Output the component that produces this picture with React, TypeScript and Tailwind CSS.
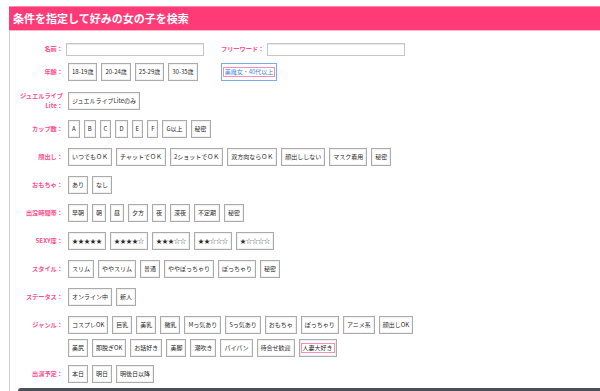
import React from "react";

const font = { fontFamily: '"Noto Sans CJK JP", "Noto Sans", sans-serif' };

type Row = { label: React.ReactNode; items: string[]; hot?: string; top?: boolean };

const rows: Row[] = [
  {
    label: (
      <>
        ジュエルライブ
        <br />
        Lite：
      </>
    ),
    items: ["ジュエルライブLiteのみ"],
  },
  { label: "カップ数：", items: ["A", "B", "C", "D", "E", "F", "G以上", "秘密"] },
  {
    label: "顔出し：",
    items: ["いつでもＯＫ", "チャットでＯＫ", "2ショットでＯＫ", "双方向ならＯＫ", "顔出ししない", "マスク着用", "秘密"],
  },
  { label: "おもちゃ：", items: ["あり", "なし"] },
  { label: "出没時間帯：", items: ["早朝", "朝", "昼", "夕方", "夜", "深夜", "不定期", "秘密"] },
  { label: "SEXY度：", items: ["★★★★★", "★★★★☆", "★★★☆☆", "★★☆☆☆", "★☆☆☆☆"] },
  { label: "スタイル：", items: ["スリム", "ややスリム", "普通", "ややぽっちゃり", "ぽっちゃり", "秘密"] },
  { label: "ステータス：", items: ["オンライン中", "新人"] },
  {
    label: "ジャンル：",
    items: [
      "コスプレOK", "巨乳", "美乳", "微乳", "Mっ気あり", "Sっ気あり", "おもちゃ", "ぽっちゃり", "アニメ系", "顔出しOK",
      "美尻", "即脱ぎOK", "お話好き", "美脚", "潮吹き", "パイパン", "待合せ歓迎", "人妻大好き",
    ],
    hot: "人妻大好き",
    top: true,
  },
  { label: "出演予定：", items: ["本日", "明日", "明後日以降"] },
];

function Label({ children, top }: { children: React.ReactNode; top?: boolean }) {
  return (
    <div
      className={`w-[53px] shrink-0 text-right text-[6.2px] font-bold leading-[9.5px] text-[#ff4d8a] ${
        top ? "pt-[4px]" : ""
      }`}
    >
      {children}
    </div>
  );
}

function Chip({ text, hot }: { text: string; hot?: boolean }) {
  return (
    <div className="flex h-[18px] items-center border border-[#ababab] bg-white px-[1px] shadow-[inset_0_0_0_1px_#f0f0f0]">
      <span
        className={`whitespace-nowrap px-[1px] text-[6px] leading-[8px] text-[#2a2a2a] ${
          hot ? "border border-[#f590b3]" : "border border-transparent"
        }`}
      >
        {text}
      </span>
    </div>
  );
}

export default function App() {
  return (
    <div className="h-[391px] w-[600px] overflow-hidden bg-white pt-[6px]" style={font}>
      <div className="ml-[9px]">
        <div className="flex h-[25px] items-center border-t border-b border-t-[#ff8db2] border-b-[#f8b4cb] bg-[#ff3b77] pl-[4px]">
          <h1 className="text-[11px] font-bold leading-none text-white">条件を指定して好みの女の子を検索</h1>
        </div>

        <div className="flex flex-col border-l border-[#cfcfcf] pt-[11px]">
          <div className="flex h-[14px] items-center">
            <Label>名前：</Label>
            <input className="ml-[3px] h-[13px] w-[138px] border border-[#c6c6c6] shadow-[inset_0_1px_1px_#e6e6e6] outline-none" />
            <div className="ml-[17px] text-[6.2px] font-bold text-[#ff4d8a]">フリーワード：</div>
            <input className="ml-[3px] h-[13px] w-[138px] border border-[#c6c6c6] shadow-[inset_0_1px_1px_#e6e6e6] outline-none" />
          </div>

          <div className="mt-[7px] flex items-center">
            <Label>年齢：</Label>
            <div className="ml-[5px] flex gap-[4px]">
              {["18-19歳", "20-24歳", "25-29歳", "30-35歳"].map((t) => (
                <Chip key={t} text={t} />
              ))}
            </div>
            <div className="ml-[23px] flex h-[18px] items-center border border-[#79adea] bg-white px-[1px]">
              <span className="whitespace-nowrap border border-[#f590b3] px-[1px] text-[6px] leading-[8px] text-[#3f86e0]">
                美魔女・40代以上
              </span>
            </div>
          </div>

          {rows.map((r, i) => (
            <div
              key={i}
              className={`flex ${r.top ? "items-start" : "items-center"} ${
                r.label === "出演予定：" ? "mt-[8px]" : "mt-[10px]"
              }`}
            >
              <Label top={r.top}>{r.label}</Label>
              <div className="ml-[5px] flex w-[358px] flex-wrap gap-x-[4px] gap-y-[5px]">
                {r.items.map((t) => (
                  <Chip key={t} text={t} hot={t === r.hot} />
                ))}
              </div>
            </div>
          ))}

          <div className="ml-[8px] mt-[5px] h-[12px] rounded-tl-[3px] bg-[#4a5058]" />
        </div>
      </div>
    </div>
  );
}
